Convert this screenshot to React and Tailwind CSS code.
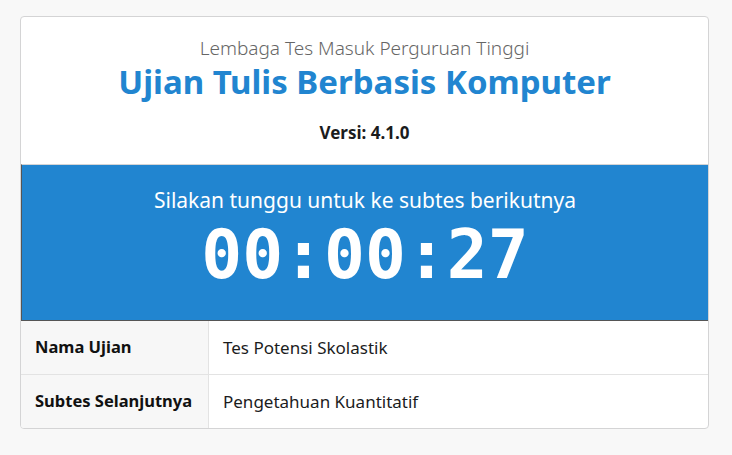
export default function App() {
  const rows = [
    ["Nama Ujian", "Tes Potensi Skolastik"],
    ["Subtes Selanjutnya", "Pengetahuan Kuantitatif"],
  ];
  return (
    <div className="min-h-[455px] w-full bg-[#f8f8f8] pl-5 pt-4 font-['Noto_Sans',sans-serif]">
      <div className="w-[689px] overflow-hidden rounded-[4px] border border-[#d4d4d5] bg-white">
        <div className="flex flex-col items-center pt-[19px] pb-[20px]">
          <div className="text-[19px] font-light leading-[24px] text-[#666]">
            Lembaga Tes Masuk Perguruan Tinggi
          </div>
          <h1 className="text-[33px] font-bold leading-[44px] text-[#2185d0]">
            Ujian Tulis Berbasis Komputer
          </h1>
          <div className="mt-[18px] text-[17px] font-bold leading-[22px] text-[#1b1c1d]">
            Versi: 4.1.0
          </div>
        </div>
        <div className="flex flex-col items-center border-t border-t-[#d4d4d5] border-b border-b-[#555] border-l border-l-[#555] bg-[#2185d0] pt-[21px] pb-[26px] text-white">
          <div className="text-[21px] leading-[28px]">Silakan tunggu untuk ke subtes berikutnya</div>
          <div className="mt-[2px] font-['DejaVu_Sans_Mono',monospace] text-[68px] font-bold leading-[78px]">
            00:00:27
          </div>
        </div>
        <div className="flex flex-col">
          {rows.map(([k, v], i) => (
            <div key={k} className={`flex ${i > 0 ? "h-[54px] border-t border-[#e3e3e3]" : "h-[53px]"}`}>
              <div className="flex w-[188px] items-center border-r border-[#e3e3e3] bg-[#f7f7f7] pl-[14px] text-[16.5px] font-bold text-[#111]">
                {k}
              </div>
              <div className="flex flex-1 items-center pl-[14px] text-[17px] text-[#1b1c1d]">{v}</div>
            </div>
          ))}
        </div>
      </div>
    </div>
  );
}
